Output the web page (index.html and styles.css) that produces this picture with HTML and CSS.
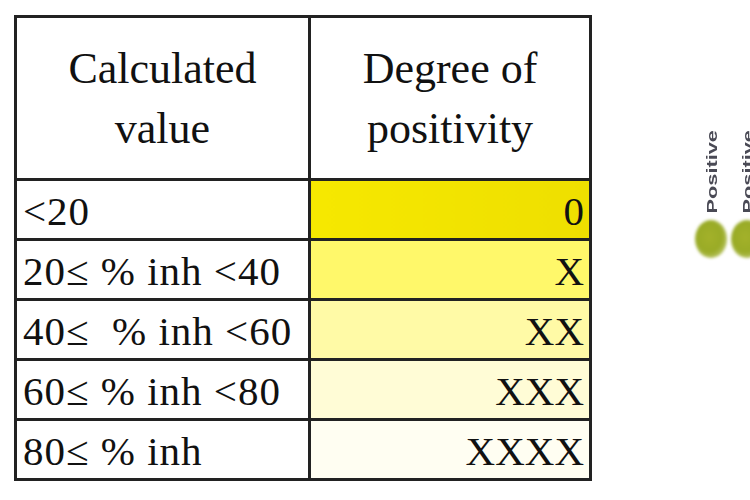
FILE: index.html
```html
<!DOCTYPE html>
<html lang="en">

<head>
    <meta charset="UTF-8">
    <title>Degree of positivity</title>
    <link rel="stylesheet" href="styles.css">
</head>

<body>
    <div class="page">
        <table class="scoretable">
            <colgroup>
                <col class="colvalue">
                <col class="coldegree">
            </colgroup>
            <tr class="headrow">
                <th>Calculated<br>value</th>
                <th>Degree of<br>positivity</th>
            </tr>
            <tr>
                <td>&lt;20</td>
                <td class="degree lvl0">0</td>
            </tr>
            <tr>
                <td>20&le; % inh &lt;40</td>
                <td class="degree lvl1">X</td>
            </tr>
            <tr>
                <td>40&le;&nbsp; % inh &lt;60</td>
                <td class="degree lvl2">XX</td>
            </tr>
            <tr>
                <td>60&le; % inh &lt;80</td>
                <td class="degree lvl3">XXX</td>
            </tr>
            <tr>
                <td>80&le; % inh</td>
                <td class="degree lvl4">XXXX</td>
            </tr>
        </table>

        <div class="plate">
            <div class="well">
                <div class="labelbox"><span class="welllabel">Positive</span></div>
                <span class="blob"></span>
            </div>
            <div class="well">
                <div class="labelbox"><span class="welllabel">Positive</span></div>
                <span class="blob"></span>
            </div>
        </div>
    </div>
</body>

</html>
```

FILE: styles.css
```css
body {
    margin: 0;
    padding: 0;
    background-color: white;
    overflow: hidden;
}

.page {
    display: flex;
    align-items: flex-start;
    padding: 15px 0 0 14px;
}

.scoretable {
    border-collapse: collapse;
    table-layout: fixed;
    width: 575px;
    font-family: "Liberation Serif", "Times New Roman", serif;
    color: #111;
}

.colvalue {
    width: 294px;
}

.coldegree {
    width: 281px;
}

.scoretable th,
.scoretable td {
    border: 3px solid #222;
    padding: 0;
}

.headrow th {
    height: 158px;
    font-weight: normal;
    font-size: 44px;
    line-height: 60px;
    text-align: center;
    vertical-align: middle;
    padding-top: 2px;
}

.scoretable td {
    height: 54px;
    font-size: 41px;
    line-height: 52px;
    letter-spacing: 1px;
    padding: 3px 0 0 6px;
    white-space: nowrap;
    text-align: left;
}

.scoretable td.degree {
    text-align: right;
    letter-spacing: 0;
    padding: 3px 5px 0 0;
}

.lvl0 {
    background: linear-gradient(to right, #f6e800, #eedf00);
}

.lvl1 {
    background-color: #fff86a;
}

.lvl2 {
    background-color: #fffaa6;
}

.lvl3 {
    background-color: #fffcd6;
}

.lvl4 {
    background-color: #fffef2;
}

.plate {
    display: flex;
    margin: 118px 0 0 101px;
}

.well {
    display: flex;
    flex-direction: column;
    align-items: center;
    width: 36px;
}

.labelbox {
    height: 77px;
    display: flex;
    align-items: center;
    justify-content: center;
}

.welllabel {
    writing-mode: vertical-rl;
    transform: rotate(180deg) scaleY(1.45);
    font-family: "Liberation Sans", Arial, sans-serif;
    font-size: 15px;
    line-height: 15px;
    font-weight: bold;
    color: #4a4a55;
}

.blob {
    width: 32px;
    height: 38px;
    margin-top: 10px;
    border-radius: 50%;
    background: radial-gradient(ellipse at 45% 45%, #a3b12a 0%, #99ab26 50%, #b9c466 75%, rgba(255, 255, 255, 0) 100%);
    filter: blur(1.5px);
}
```
